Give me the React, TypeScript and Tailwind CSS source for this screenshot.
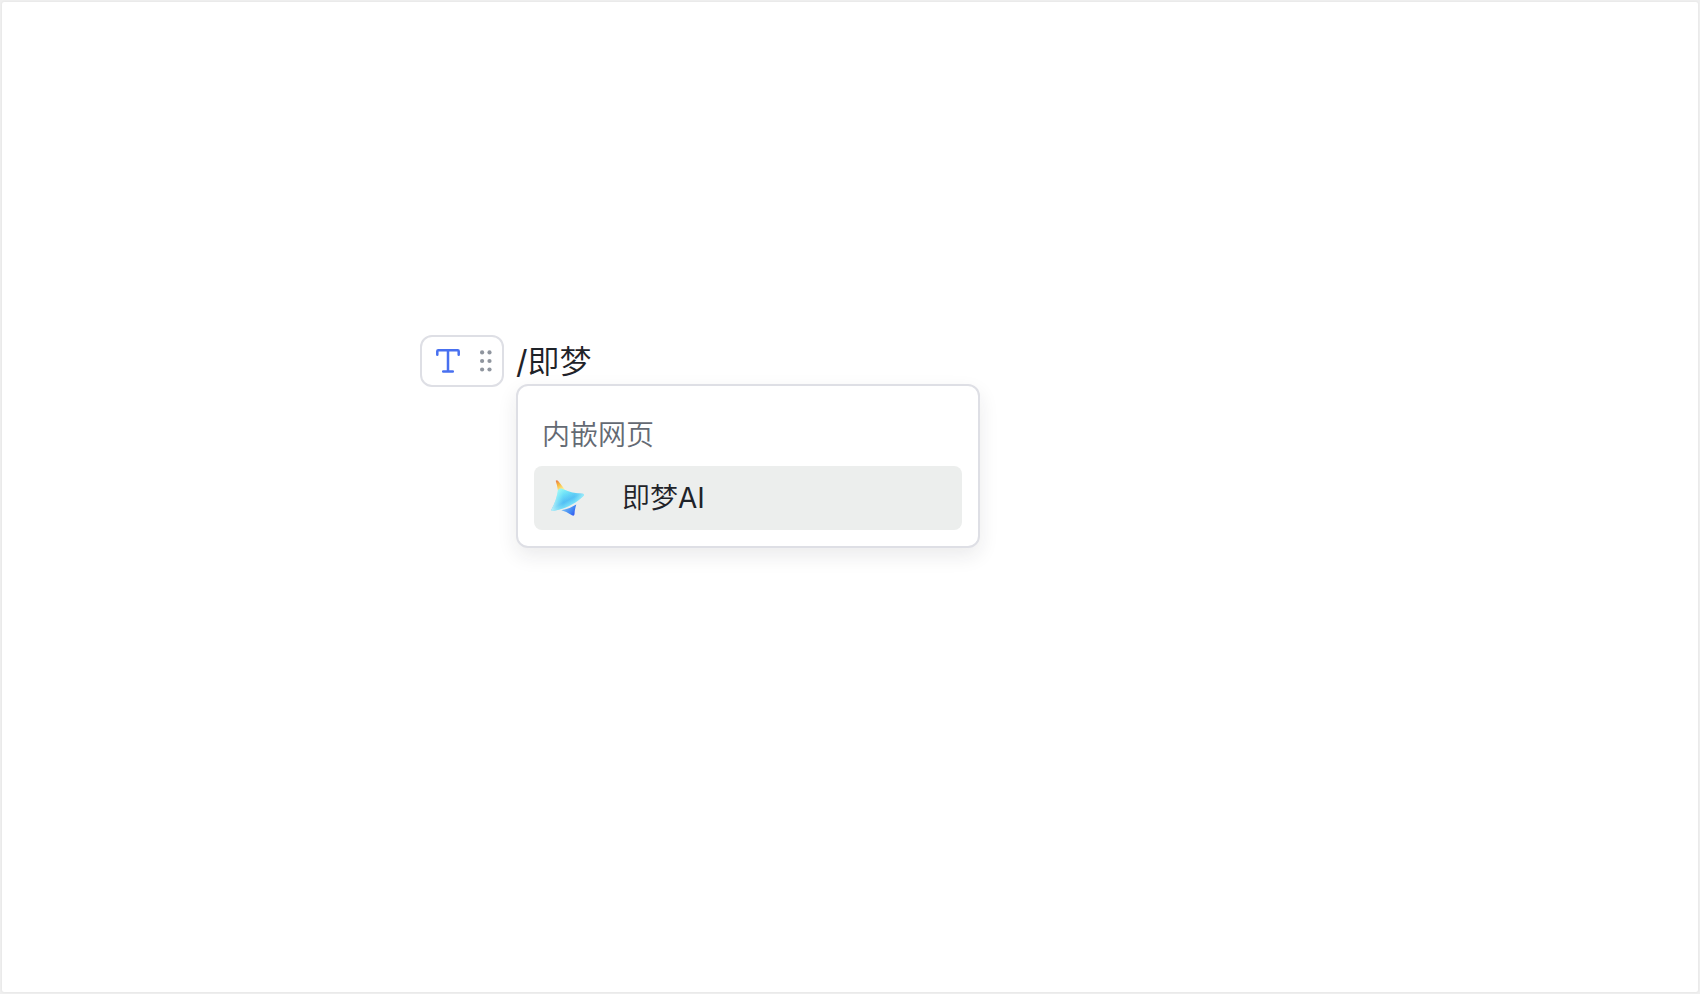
function TextIcon() {
  return (
    <svg viewBox="0 0 24 24" className="h-6 w-6" fill="none" stroke="#4870f0" strokeWidth="2.5" strokeLinecap="round" strokeLinejoin="round" aria-hidden="true">
      <path d="M1.3 5.8V2.2Q1.3 1.3 2.2 1.3H21.8Q22.7 1.3 22.7 2.2V5.8" />
      <path d="M12 1.3V22.5M7.2 22.6H16.8" />
    </svg>
  );
}

function DragHandleIcon() {
  return (
    <svg viewBox="0 0 12 22" className="h-[22px] w-3" fill="#8f959e" aria-hidden="true">
      <circle cx="2.1" cy="2.4" r="2.1" />
      <circle cx="9.5" cy="2.4" r="2.1" />
      <circle cx="2.1" cy="11" r="2.1" />
      <circle cx="9.5" cy="11" r="2.1" />
      <circle cx="2.1" cy="19.5" r="2.1" />
      <circle cx="9.5" cy="19.5" r="2.1" />
    </svg>
  );
}

function JimengIcon() {
  return (
    <svg viewBox="-0.7 0 36 36" className="h-9 w-9" aria-hidden="true">
      <defs>
        <linearGradient id="tip" x1="6" y1="0" x2="12" y2="10" gradientUnits="userSpaceOnUse">
          <stop offset="0" stopColor="#e87848" />
          <stop offset="0.45" stopColor="#f8bc40" />
          <stop offset="1" stopColor="#fff3a0" />
        </linearGradient>
        <linearGradient id="body" x1="8" y1="11" x2="17" y2="28" gradientUnits="userSpaceOnUse">
          <stop offset="0" stopColor="#8cf4f6" />
          <stop offset="0.3" stopColor="#66dcf8" />
          <stop offset="0.65" stopColor="#4cb8f4" />
          <stop offset="1" stopColor="#7ce8fa" />
        </linearGradient>
        <linearGradient id="wing" x1="0" y1="0" x2="36" y2="0" gradientUnits="userSpaceOnUse">
          <stop offset="0" stopColor="#d4fbf8" stopOpacity="0.9" />
          <stop offset="0.35" stopColor="#90f0f8" stopOpacity="0.1" />
          <stop offset="0.65" stopColor="#80ecf8" stopOpacity="0.2" />
          <stop offset="1" stopColor="#c4fafa" stopOpacity="0.9" />
        </linearGradient>
        <linearGradient id="base" x1="15" y1="27" x2="25" y2="34" gradientUnits="userSpaceOnUse">
          <stop offset="0" stopColor="#6bb2f4" />
          <stop offset="0.6" stopColor="#3f84f4" />
          <stop offset="1" stopColor="#3450f0" />
        </linearGradient>
      </defs>
      <path d="M5 .8Q6.3-.3 7.7 1.3L14.3 9.8 7.2 10.6Q6.5 5 5 .8Z" fill="url(#tip)" />
      <path d="M7.2 10.6Q8.4 7.6 11.6 8.8Q21.5 13.6 32 13.7Q34.5 14.1 32.4 16.2C25 23.6 15.4 28.6 2.2 31Q-.2 31 1 29Q5.8 20.6 7.2 10.6Z" fill="url(#body)" />
      <path d="M7.2 10.6Q8.4 7.6 11.6 8.8Q21.5 13.6 32 13.7Q34.5 14.1 32.4 16.2C25 23.6 15.4 28.6 2.2 31Q-.2 31 1 29Q5.8 20.6 7.2 10.6Z" fill="url(#wing)" />
      <path d="M10.6 30.3Q18.8 28.8 25.6 24.4Q23.9 29.5 23.8 34.2Q23.4 36.5 21.2 35.2Q17 32 10.6 30.3Z" fill="url(#base)" />
    </svg>
  );
}

export default function App() {
  return (
    <div className="flex min-h-screen bg-[#efefef] p-0.5 font-[Inter,'Noto_Sans_CJK_SC',sans-serif] font-[350] text-[#1f2329]">
      <main className="flex-1 rounded-xs bg-white pt-[333px] pl-[418px] shadow-[0_0_2px_#dcdcdc]">
        <div className="flex items-start gap-3">
          <div className="flex h-[52px] w-[84px] items-center justify-between rounded-xl border-2 border-[#dedfe5] pr-2.5 pl-3.5">
            <button type="button" aria-label="文本" className="cursor-pointer">
              <TextIcon />
            </button>
            <button type="button" aria-label="拖动" className="cursor-grab">
              <DragHandleIcon />
            </button>
          </div>
          <div className="relative">
            <p className="h-[49px] text-[32px] leading-[54px] whitespace-nowrap outline-none" contentEditable suppressContentEditableWarning>
              <span className="font-normal">/</span>即梦
            </p>
            <div className="absolute top-full left-0 w-[464px] rounded-xl border-2 border-[#dedfe5] bg-white p-4 shadow-[0_8px_20px_rgba(31,35,41,0.09)]">
              <h2 className="px-2 pt-3 pb-2.5 text-[28px] leading-[42px] text-[#646a73]">内嵌网页</h2>
              <button type="button" className="flex h-16 w-full cursor-pointer items-center gap-9 rounded-lg bg-[#eceeed] px-4 text-[28px] leading-[42px]">
                <JimengIcon />
                <span>即梦<span className="font-normal">AI</span></span>
              </button>
            </div>
          </div>
        </div>
      </main>
    </div>
  );
}
